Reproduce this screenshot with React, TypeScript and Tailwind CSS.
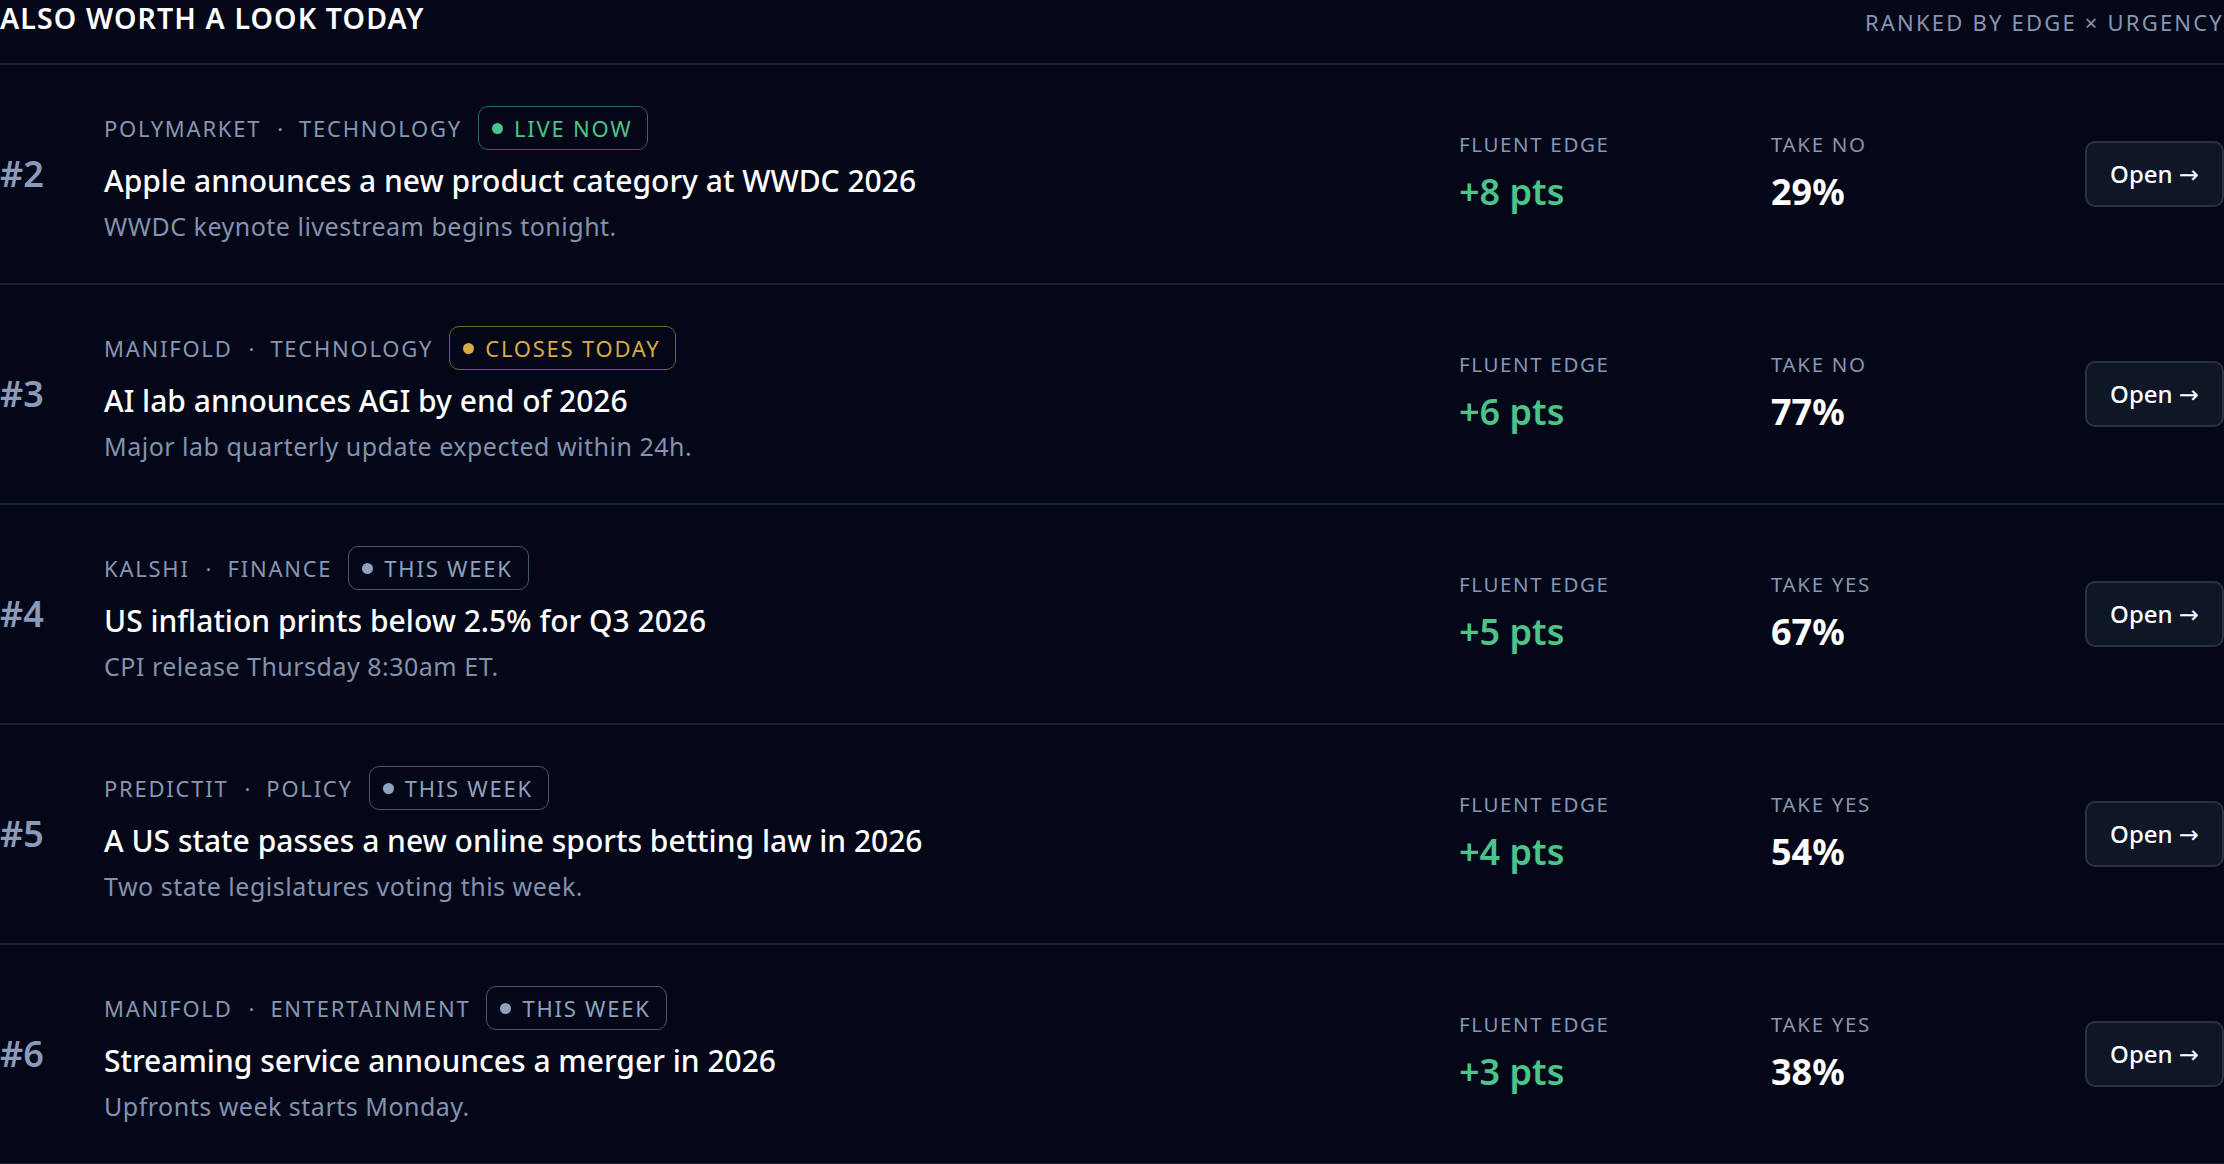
import React from "react";

type Tone = "live" | "closing" | "week";

type Pick = {
  rank: number;
  source: string;
  category: string;
  tone: Tone;
  badge: string;
  title: string;
  note: string;
  edge: number;
  side: "NO" | "YES";
  price: number;
};

const picks: Pick[] = [
  {
    rank: 2,
    source: "POLYMARKET",
    category: "TECHNOLOGY",
    tone: "live",
    badge: "LIVE NOW",
    title: "Apple announces a new product category at WWDC 2026",
    note: "WWDC keynote livestream begins tonight.",
    edge: 8,
    side: "NO",
    price: 29,
  },
  {
    rank: 3,
    source: "MANIFOLD",
    category: "TECHNOLOGY",
    tone: "closing",
    badge: "CLOSES TODAY",
    title: "AI lab announces AGI by end of 2026",
    note: "Major lab quarterly update expected within 24h.",
    edge: 6,
    side: "NO",
    price: 77,
  },
  {
    rank: 4,
    source: "KALSHI",
    category: "FINANCE",
    tone: "week",
    badge: "THIS WEEK",
    title: "US inflation prints below 2.5% for Q3 2026",
    note: "CPI release Thursday 8:30am ET.",
    edge: 5,
    side: "YES",
    price: 67,
  },
  {
    rank: 5,
    source: "PREDICTIT",
    category: "POLICY",
    tone: "week",
    badge: "THIS WEEK",
    title: "A US state passes a new online sports betting law in 2026",
    note: "Two state legislatures voting this week.",
    edge: 4,
    side: "YES",
    price: 54,
  },
  {
    rank: 6,
    source: "MANIFOLD",
    category: "ENTERTAINMENT",
    tone: "week",
    badge: "THIS WEEK",
    title: "Streaming service announces a merger in 2026",
    note: "Upfronts week starts Monday.",
    edge: 3,
    side: "YES",
    price: 38,
  },
];

const badgeStyles: Record<Tone, { box: string; dot: string }> = {
  live: { box: "border-[#2b6b4d] text-[#4cc38a]", dot: "bg-[#4cc38a]" },
  closing: { box: "border-[#7a6331] text-[#d8aa45]", dot: "bg-[#d8aa45]" },
  week: { box: "border-[#465671] text-[#8ea2bf]", dot: "bg-[#8ea2bf]" },
};

const Badge = ({ tone, label }: { tone: Tone; label: string }) => {
  const s = badgeStyles[tone];
  return (
    <span
      className={`ml-[16px] flex h-[44px] items-center gap-[11px] rounded-[10px] border-[1.5px] pl-[13px] pr-[15px] ${s.box}`}
    >
      <span className={`h-[11px] w-[11px] rounded-full ${s.dot}`} />
      <span className="tracking-[0.08em]">{label}</span>
    </span>
  );
};

const PickRow = ({ pick }: { pick: Pick }) => {
  return (
    <div className="grid grid-cols-[104px_1fr_312px_313px_140px] items-center border-b-2 border-[#1a2132] py-[41px]">
      {/* rank */}
      <div className="text-[36px] font-semibold leading-[44px] text-[#8a9bb9]">
        #{pick.rank}
      </div>

      {/* market info */}
      <div className="flex flex-col">
        <div className="flex items-center text-[22px] leading-[44px] text-[#8796b0]">
          <span className="tracking-[0.08em]">{pick.source}</span>
          <span className="mx-[16px]">·</span>
          <span className="tracking-[0.08em]">{pick.category}</span>
          <Badge tone={pick.tone} label={pick.badge} />
        </div>
        <div className="mt-[11px] text-[30px] font-medium leading-[40px] text-white">
          {pick.title}
        </div>
        <div className="mt-[9px] text-[25px] leading-[32px] tracking-[0.02em] text-[#8392ad]">
          {pick.note}
        </div>
      </div>

      {/* edge */}
      <div className="mb-[4px] flex flex-col">
        <span className="text-[20.5px] leading-[28px] tracking-[0.08em] text-[#8796b0]">
          FLUENT EDGE
        </span>
        <span className="mt-[11px] text-[36px] font-semibold leading-[46px] text-[#4cc38a]">
          +{pick.edge} pts
        </span>
      </div>

      {/* take */}
      <div className="mb-[4px] flex flex-col">
        <span className="text-[20.5px] leading-[28px] tracking-[0.08em] text-[#8796b0]">
          TAKE {pick.side}
        </span>
        <span className="mt-[11px] text-[36px] font-bold leading-[46px] text-white">
          {pick.price}%
        </span>
      </div>

      {/* action */}
      <div className="flex justify-end">
        <button className="flex h-[66px] w-[139px] items-center justify-center rounded-[10px] border-2 border-[#283143] bg-[#0f1626] text-[24px] font-medium text-white">
          Open →
        </button>
      </div>
    </div>
  );
};

export default function App() {
  return (
    <div
      className="min-h-screen w-full overflow-hidden bg-[#040718] text-white"
      style={{ fontFamily: '"Noto Sans", "DejaVu Sans", sans-serif' }}
    >
      {/* header */}
      <div className="flex h-[65px] items-start justify-between border-b-2 border-[#1a2132]">
        <h2 className="text-[28.5px] font-semibold leading-[36px] tracking-[0.04em]">
          ALSO WORTH A LOOK TODAY
        </h2>
        <span className="whitespace-nowrap text-[22px] leading-[44px] tracking-[0.1em] text-[#8796b0]">
          RANKED BY EDGE × URGENCY
        </span>
      </div>

      {/* list */}
      <div className="flex flex-col">
        {picks.map((p) => (
          <PickRow key={p.rank} pick={p} />
        ))}
      </div>
    </div>
  );
}
